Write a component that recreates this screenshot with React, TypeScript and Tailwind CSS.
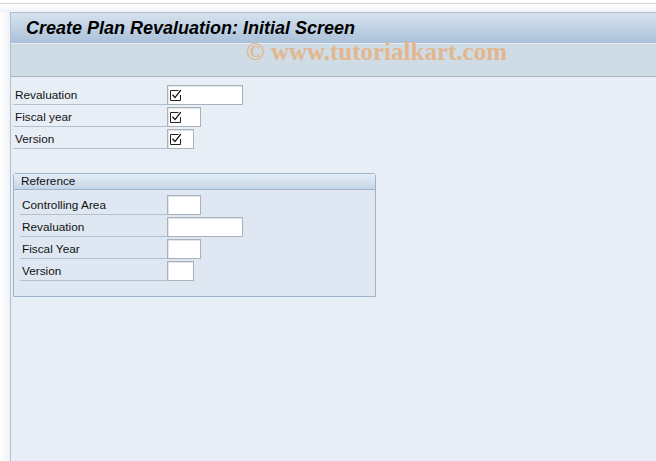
import React from "react";

function Check() {
  return (
    <svg width="12" height="12" viewBox="0 0 12 12" className="block">
      <path d="M8.5 1.5 H0.5 V11.5 H10.5 V6" fill="none" stroke="#222" strokeWidth="1" />
      <polyline points="2.5,5.8 5,8.6 10.8,1.2" fill="none" stroke="#111" strokeWidth="1.3" />
    </svg>
  );
}

function Field({ w, check }: { w: string; check?: boolean }) {
  return (
    <div
      className={`${w} h-[20px] bg-white border border-[#a9b1b9] shadow-[inset_1px_1px_0_#e2e6ea] flex items-center pl-[2px]`}
    >
      {check ? <Check /> : null}
    </div>
  );
}

function Row({ label, lw, w, check }: { label: string; lw: string; w: string; check?: boolean }) {
  return (
    <div className="flex items-start h-[22px]">
      <div className={`${lw} h-[20px] border-b border-[#b4c0cc] pl-[2px] text-[11.8px] leading-[20px] text-[#111]`}>
        {label}
      </div>
      <Field w={w} check={check} />
    </div>
  );
}

export default function App() {
  return (
    <div
      className="w-[656px] h-[461px] bg-white flex flex-col overflow-hidden"
      style={{ fontFamily: '"Liberation Sans", Arial, sans-serif' }}
    >
      <div className="h-[12px] flex flex-col">
        <div className="h-[3px] bg-white" />
        <div className="h-[1px] bg-[#d3d6da]" />
        <div className="flex-1 bg-gradient-to-b from-[#ffffff] to-[#eef2f7]" />
      </div>
      <div className="flex flex-1">
        <div className="w-[10px] bg-gradient-to-r from-[#ffffff] to-[#eef2f6]" />
        <div className="flex-1 flex flex-col border-l border-t border-[#b3c1cf] bg-[#e8eef6] relative">
          <div className="h-[30px] bg-gradient-to-b from-[#d6e2ee] to-[#aac1d9] flex items-center pl-[15px]">
            <span className="text-[18px] font-bold italic text-black leading-none">
              Create Plan Revaluation: Initial Screen
            </span>
          </div>
          <div className="h-[1px] bg-[#e4ebf2]" />
          <div className="h-[33px] bg-[#cfdce6] border-b border-[#a7b6c5]" />
          <div
            className="absolute left-[235px] top-[26px] text-[25px] font-bold text-[#e6b384] opacity-90 leading-none"
            style={{ fontFamily: '"Liberation Serif", "Times New Roman", serif' }}
          >
            © www.tutorialkart.com
          </div>
          <div className="pt-[8px] pl-[2px] flex flex-col">
            <Row label="Revaluation" lw="w-[154px]" w="w-[76px]" check />
            <Row label="Fiscal year" lw="w-[154px]" w="w-[34px]" check />
            <Row label="Version" lw="w-[154px]" w="w-[27px]" check />
            <div className="mt-[22px] w-[363px] h-[124px] border border-[#9fb4ca] rounded-t-[3px] bg-[#dfe8f2] flex flex-col">
              <div className="h-[16px] bg-gradient-to-b from-[#e6eef7] to-[#c3d5e8] border-b border-[#9fb4ca] pl-[7px] text-[11.8px] leading-[15px] text-[#111]">
                Reference
              </div>
              <div className="pt-[5px] pl-[6px] flex flex-col">
                <Row label="Controlling Area" lw="w-[147px]" w="w-[34px]" />
                <Row label="Revaluation" lw="w-[147px]" w="w-[76px]" />
                <Row label="Fiscal Year" lw="w-[147px]" w="w-[34px]" />
                <Row label="Version" lw="w-[147px]" w="w-[27px]" />
              </div>
            </div>
          </div>
        </div>
      </div>
    </div>
  );
}
